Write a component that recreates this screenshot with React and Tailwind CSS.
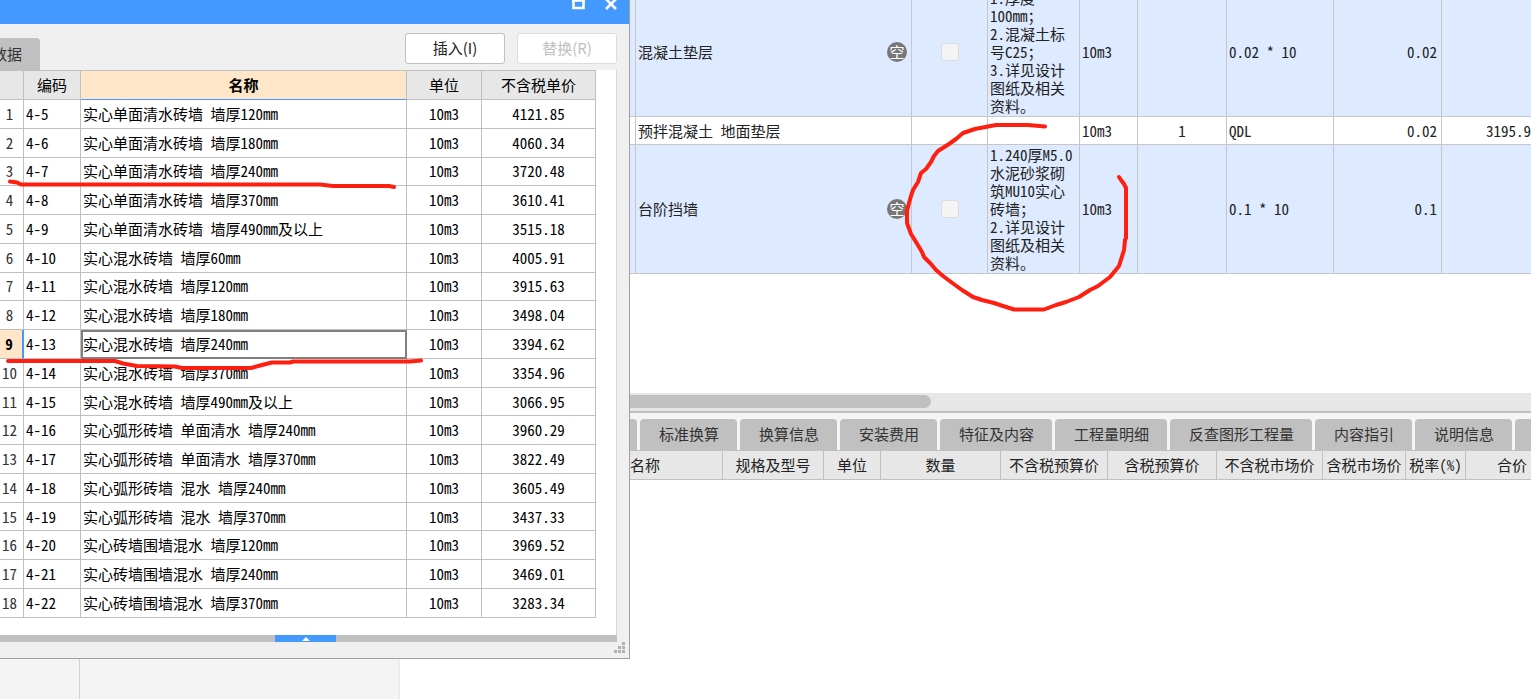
const QUOTAS = [
  { code: "4-5", name: "实心单面清水砖墙 墙厚120mm", price: "4121.85" },
  { code: "4-6", name: "实心单面清水砖墙 墙厚180mm", price: "4060.34" },
  { code: "4-7", name: "实心单面清水砖墙 墙厚240mm", price: "3720.48" },
  { code: "4-8", name: "实心单面清水砖墙 墙厚370mm", price: "3610.41" },
  { code: "4-9", name: "实心单面清水砖墙 墙厚490mm及以上", price: "3515.18" },
  { code: "4-10", name: "实心混水砖墙 墙厚60mm", price: "4005.91" },
  { code: "4-11", name: "实心混水砖墙 墙厚120mm", price: "3915.63" },
  { code: "4-12", name: "实心混水砖墙 墙厚180mm", price: "3498.04" },
  { code: "4-13", name: "实心混水砖墙 墙厚240mm", price: "3394.62" },
  { code: "4-14", name: "实心混水砖墙 墙厚370mm", price: "3354.96" },
  { code: "4-15", name: "实心混水砖墙 墙厚490mm及以上", price: "3066.95" },
  { code: "4-16", name: "实心弧形砖墙 单面清水 墙厚240mm", price: "3960.29" },
  { code: "4-17", name: "实心弧形砖墙 单面清水 墙厚370mm", price: "3822.49" },
  { code: "4-18", name: "实心弧形砖墙 混水 墙厚240mm", price: "3605.49" },
  { code: "4-19", name: "实心弧形砖墙 混水 墙厚370mm", price: "3437.33" },
  { code: "4-20", name: "实心砖墙围墙混水 墙厚120mm", price: "3969.52" },
  { code: "4-21", name: "实心砖墙围墙混水 墙厚240mm", price: "3469.01" },
  { code: "4-22", name: "实心砖墙围墙混水 墙厚370mm", price: "3283.34" },
];

const SELECTED = "4-13";

const ITEMS = [
  {
    name: "混凝土垫层",
    isBill: true,
    feature: "1.厚度\n100mm；\n2.混凝土标\n号C25；\n3.详见设计\n图纸及相关\n资料。",
    unit: "10m3",
    content: "",
    expression: "0.02 * 10",
    quantity: "0.02",
    price: "",
  },
  {
    name: "预拌混凝土 地面垫层",
    isBill: false,
    feature: "",
    unit: "10m3",
    content: "1",
    expression: "QDL",
    quantity: "0.02",
    price: "3195.9",
  },
  {
    name: "台阶挡墙",
    isBill: true,
    feature: "1.240厚M5.0\n水泥砂浆砌\n筑MU10实心\n砖墙；\n2.详见设计\n图纸及相关\n资料。",
    unit: "10m3",
    content: "",
    expression: "0.1 * 10",
    quantity: "0.1",
    price: "",
  },
];

const TABS = [
  "标准换算",
  "换算信息",
  "安装费用",
  "特征及内容",
  "工程量明细",
  "反查图形工程量",
  "内容指引",
  "说明信息",
];

const DETAIL_COLUMNS = [
  { label: "名称", className: "w-[93px] text-left" },
  { label: "规格及型号", className: "w-[101px] text-center" },
  { label: "单位", className: "w-[57px] text-center" },
  { label: "数量", className: "w-[120px] text-center" },
  { label: "不含税预算价", className: "w-[107px] text-center" },
  { label: "含税预算价", className: "w-[109px] text-center" },
  { label: "不含税市场价", className: "w-[106px] text-center" },
  { label: "含税市场价", className: "w-[83px] text-center" },
  { label: "税率(%)", className: "w-[60px] text-center" },
  { label: "合价", className: "pr-1 text-right" },
];

const TitleBar = () => (
  <header className="flex h-6 shrink-0 items-start justify-end gap-5 bg-[#4499ff] pr-3">
    <button type="button" aria-label="最大化" className="h-[10px] w-[13px]">
      <svg viewBox="0 0 13 10" className="h-[10px] w-[13px]" fill="none" stroke="white" strokeWidth="2.6">
        <path d="M1.500 -1V8H11.500V-1M0 0.500H13" />
      </svg>
    </button>
    <button type="button" aria-label="关闭" className="h-[10px] w-3">
      <svg viewBox="0 0 12 10" className="h-[10px] w-3" fill="none" stroke="white" strokeWidth="2.6">
        <path d="M1 -1L11 9M11 -1L1 9" />
      </svg>
    </button>
  </header>
);

const QuotaTable = () => (
  <table className="h-[548px] w-[596px] table-fixed border-separate border-spacing-0 border-t border-[#c0c0c0] leading-5">
    <thead>
      <tr className="h-[29px] bg-[#e7e7e7]">
        <th className="w-6 border-r border-b border-[#c0c0c0]" />
        <th className="w-[57px] border-r border-b border-[#c0c0c0] font-normal">编码</th>
        <th className="border-r border-b border-r-[#c0c0c0] border-b-[#4499ff] bg-[#ffe6c8] font-bold">
          名称
        </th>
        <th className="w-[75px] border-r border-b border-[#c0c0c0] font-normal">单位</th>
        <th className="w-[114px] border-r border-b border-[#c0c0c0] font-normal">不含税单价</th>
      </tr>
    </thead>
    <tbody>
      {QUOTAS.map((row, index) => {
        const selected = row.code === SELECTED;
        return (
          <tr key={row.code}>
            <th
              className={
                selected
                  ? "border-r-2 border-b border-r-[#4499ff] border-b-[#c0c0c0] bg-[#ffe6c8] pr-1 text-center font-bold"
                  : "border-r border-b border-[#c0c0c0] pr-1 text-center font-normal text-[#333333]"
              }
            >
              {index + 1}
            </th>
            <td className="border-r border-b border-[#c0c0c0] pl-0.5">{row.code}</td>
            <td
              className={
                selected
                  ? "border-r border-b border-[#808080] pl-0.5 outline-2 -outline-offset-2 outline-[#808080]"
                  : "border-r border-b border-[#c0c0c0] pl-0.5"
              }
            >
              {row.name}
            </td>
            <td className="border-r border-b border-[#c0c0c0] text-center">10m3</td>
            <td className="border-r border-b border-[#c0c0c0] text-center">{row.price}</td>
          </tr>
        );
      })}
    </tbody>
  </table>
);

const QuotaDialog = () => (
  <section className="flex flex-col border-r border-b border-[#a0a0a0] bg-[#f0f0f0]">
    <TitleBar />
    <div className="flex h-[46px] items-end justify-between pr-3 font-['Noto_Sans_CJK_SC',sans-serif]">
      <div className="flex h-8 w-10 items-center justify-end overflow-hidden rounded-tr-sm bg-[#c0c0c0] pr-[18px] whitespace-nowrap text-[#333333]">
        数据
      </div>
      <div className="flex gap-3 pb-[6px]">
        <button
          type="button"
          className="h-[31px] w-[100px] rounded-[3px] border border-[#c0c0c0] bg-white text-[#222222]"
        >
          插入(I)
        </button>
        <button
          type="button"
          disabled
          className="h-[31px] w-[100px] rounded-[3px] border border-[#dcdcdc] bg-white text-[#c0c0c0]"
        >
          替换(R)
        </button>
      </div>
    </div>
    <div className="mr-3 border-r border-[#d8d8d8] bg-white pb-[17px]">
      <QuotaTable />
    </div>
    <div className="mr-3 flex h-[7px] bg-[#c0c0c0] pl-[275px]">
      <button
        type="button"
        aria-label="展开"
        className="flex w-[61px] items-center justify-center bg-[#4499ff]"
      >
        <svg viewBox="0 0 8 4" className="h-1 w-2" fill="white">
          <path d="M4 0L8 4H0Z" />
        </svg>
      </button>
    </div>
    <div className="flex h-4 items-start justify-end pr-1">
      <svg viewBox="0 0 11 11" className="h-[11px] w-[11px]" fill="#b0b0b0">
        <path d="M8 0h3v3h-3zM4 4h3v3h-3zM8 4h3v3h-3zM0 8h3v3h-3zM4 8h3v3h-3zM8 8h3v3h-3z" />
      </svg>
    </div>
  </section>
);

const ItemRow = ({ item }) => {
  const cell = "border-r border-b border-[#c6c6c6]";
  return (
    <tr className={item.isBill ? "h-[129px] bg-[#deeaff]" : "h-7 bg-white"}>
      <td className={cell} />
      <td className={`${cell} px-0.5`}>
        <div className="flex items-center justify-between pr-0.5">
          {item.name}
          {item.isBill && (
            <span className="flex h-5 w-5 items-center justify-center rounded-full bg-[#777777] text-white">
              空
            </span>
          )}
        </div>
      </td>
      <td className={cell}>
        {item.isBill && (
          <input
            type="checkbox"
            aria-label={item.name}
            className="mx-auto block h-[18px] w-[18px] appearance-none rounded-[3px] border border-[#dddddd] bg-[#f4f4f4]"
          />
        )}
      </td>
      <td className={`${cell} pl-0.5 leading-[18px] whitespace-pre`}>{item.feature}</td>
      <td className={`${cell} pl-0.5`}>{item.unit}</td>
      <td className={`${cell} text-center`}>{item.content}</td>
      <td className={`${cell} pl-0.5`}>{item.expression}</td>
      <td className={`${cell} pr-1 text-right`}>{item.quantity}</td>
      <td className="border-b border-[#c6c6c6] text-right">{item.price}</td>
    </tr>
  );
};

const ItemGrid = () => (
  <div className="h-[393px] overflow-hidden">
    <table className="-mt-3 w-full table-fixed border-separate border-spacing-0 leading-5 text-[#222222]">
      <colgroup>
        <col className="w-[6px]" />
        <col className="w-[276px]" />
        <col className="w-[76px]" />
        <col className="w-[92px]" />
        <col className="w-[58px]" />
        <col className="w-[89px]" />
        <col className="w-[107px]" />
        <col className="w-[108px]" />
        <col />
      </colgroup>
      <tbody>
        {ITEMS.map((item) => (
          <ItemRow key={item.name} item={item} />
        ))}
      </tbody>
    </table>
  </div>
);

const DetailPanel = () => (
  <section>
    <nav className="flex h-[38px] items-end gap-[3px] overflow-hidden border-b border-[#c0c0c0] bg-[#f5f5f5] font-['Noto_Sans_CJK_SC',sans-serif]">
      <span className="h-[31px] w-[7px] shrink-0 rounded-tr-sm bg-[#c0c0c0]" />
      {TABS.map((tab) => (
        <button
          key={tab}
          type="button"
          className="h-[31px] shrink-0 rounded-t-sm bg-[#c0c0c0] pr-[18px] pl-[19px] text-[#333333]"
        >
          {tab}
        </button>
      ))}
      <span className="h-[31px] flex-1 rounded-tl-sm bg-[#c0c0c0]" />
    </nav>
    <table className="w-full table-fixed border-separate border-spacing-0 leading-5">
      <thead>
        <tr className="h-[29px] bg-[#e7e7e7] text-[#222222]">
          {DETAIL_COLUMNS.map((col) => (
            <th
              key={col.label}
              className={`border-r border-b border-[#c0c0c0] font-normal whitespace-nowrap last:border-r-0 ${col.className}`}
            >
              {col.label}
            </th>
          ))}
        </tr>
      </thead>
    </table>
  </section>
);

// Hand-drawn red pen marks on top of both tables
const PenMarks = () => (
  <svg
    className="pointer-events-none absolute top-0 left-0 h-[330px] w-[1140px] overflow-visible"
    viewBox="0 0 1140 330"
    fill="none"
    stroke="#ff1f10"
    strokeWidth="4"
    strokeLinecap="round"
    strokeLinejoin="round"
  >
    <path d="M10 181.500L17 182.500L21 184.500L320 184.500L333 186L389 186L394 187" />
    <path d="M8 361H115L123 363.500L137 366L175 366.500L182 368H251L262 365L272 362.500H290L293 361.500H410L421 360.500" />
    <path d="M1045 126.500L1028 125H996L988 126.500L975 129L963 133L956 139L949 144L938 151L934 156L931 162L926 169L921 173L918 182L913 190L911 196L909 203L907 211V223L911 234L916 242L922 252L924 257L931 264L936 270L943 276L951 282L962 290L973 297L982 300L994 303L1003 306L1014 309.500H1044L1056 305L1066 302L1079 297L1090 290L1098 286L1110 277L1119 266L1124 250L1125 240L1126 238V188L1124 184L1121 180L1119 177" />
  </svg>
);

export default function App() {
  return (
    <div className="relative flex h-screen overflow-hidden bg-white font-['Noto_Sans_Mono_CJK_SC','Noto_Sans_CJK_SC',monospace] text-[15px] text-black">
      <div className="flex w-[630px] shrink-0 flex-col">
        <QuotaDialog />
        <div className="flex flex-1">
          <div className="w-20 border-r border-[#d4d4d4] bg-[#f4f4f4]" />
          <div className="w-80 border-r-2 border-[#ececec] bg-[#f4f4f4]" />
        </div>
      </div>
      <main className="min-w-0 flex-1">
        <ItemGrid />
        <div className="h-5 border-b-2 border-[#c0c0c0] bg-[#e7e7e7] pt-[2px]">
          <div className="h-[13px] w-[301px] rounded-r-full bg-[#c0c0c0]" />
        </div>
        <DetailPanel />
      </main>
      <PenMarks />
    </div>
  );
}
